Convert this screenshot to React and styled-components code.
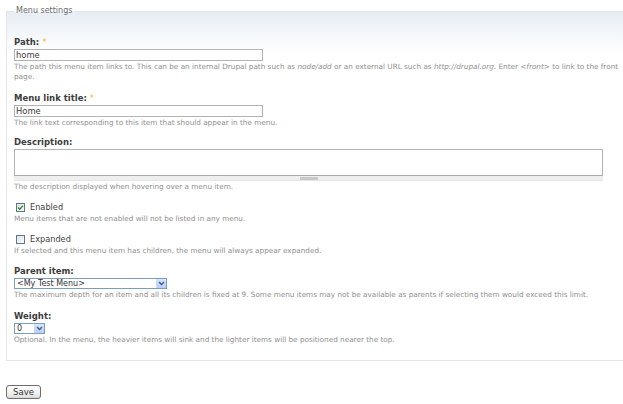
import React from 'react';
import styled, { createGlobalStyle } from 'styled-components';

const GlobalStyle = createGlobalStyle`
  html, body {
    margin: 0;
    padding: 0;
    background: #fff;
    overflow: hidden;
  }
  body {
    font-family: "DejaVu Sans", Verdana, sans-serif;
    color: #494949;
  }
`;

const Page = styled.div`
  width: 623px;
  height: 404px;
  padding: 6px 0 0 6px;
  box-sizing: border-box;
  overflow: hidden;
`;

const Fieldset = styled.fieldset`
  width: 640px;
  margin: 0;
  padding: 21px 7px 15px 7px;
  box-sizing: border-box;
  border: 1px solid #e3e5e8;
  background: linear-gradient(to bottom, #e7edf4 0, #f3f6f9 20px, #fff 42px);
`;

const Legend = styled.legend`
  padding: 0 2px;
  font-size: 8px;
  line-height: 10px;
  color: #6a6a6a;
`;

const FormItem = styled.div`
  margin-bottom: ${({ $gap }) => ($gap !== undefined ? $gap : 10)}px;
`;

const Label = styled.label`
  display: block;
  margin-bottom: 2px;
  font-size: 8.5px;
  line-height: 10px;
  font-weight: bold;
  color: #3c3c3c;
`;

const Required = styled.span`
  color: #f5b92e;
  font-weight: normal;
`;

const TextInput = styled.div`
  width: 249px;
  height: 12px;
  box-sizing: border-box;
  border: 1px solid #b3b3b3;
  padding: 0 1px;
  font-size: 8.4px;
  line-height: 10px;
  color: #3a3a3a;
  background: #fff;
`;

const TextArea = styled.div`
  width: 589px;
  height: 27px;
  box-sizing: border-box;
  border: 1px solid #b3b3b3;
  border-bottom-color: #a9a9a9;
  background: #fff;
`;

const Grip = styled.div`
  width: 589px;
  height: 5px;
  display: flex;
  justify-content: center;
  background: #eeeeee;
  border-bottom: 1px solid #e6e6e6;
  box-sizing: border-box;
`;

const GripHandle = styled.div`
  width: 18px;
  height: 3px;
  margin-top: 1px;
  background: #c9c9c9;
`;

const Description = styled.div`
  margin-top: 1px;
  font-size: 7.28px;
  line-height: 10px;
  color: #8f8f8f;

  em {
    font-style: italic;
  }
`;

const CheckRow = styled.div`
  display: flex;
  align-items: center;
  height: 12px;
  padding-left: 2px;
  font-size: 8.2px;
  color: #404040;
`;

const CheckBox = styled.span`
  width: 9px;
  height: 9px;
  box-sizing: border-box;
  margin-right: 5px;
  display: flex;
  align-items: center;
  justify-content: center;
  border: 1px solid #5d7892;
  background: linear-gradient(135deg, #e3e3de 0%, #fbfbfa 100%);
`;

const SelectBox = styled.div`
  width: ${({ $width }) => $width}px;
  height: 11px;
  box-sizing: border-box;
  display: flex;
  align-items: center;
  border: 1px solid #7f9db9;
  background: #fff;
  font-size: 8px;
  color: #333;
`;

const SelectText = styled.span`
  flex: 1;
  padding-left: 2px;
  line-height: 9px;
  white-space: nowrap;
`;

const SelectArrow = styled.span`
  width: 9px;
  height: 9px;
  display: flex;
  align-items: center;
  justify-content: center;
  background: linear-gradient(to bottom, #dbe6fd 0%, #b9cdf7 100%);
  border-left: 1px solid #c9d8f8;
`;

const SaveButton = styled.button`
  margin-top: 24px;
  width: 35px;
  height: 14px;
  padding: 0;
  box-sizing: border-box;
  border: 1px solid #6f6f6f;
  border-radius: 3px;
  background: linear-gradient(to bottom, #ffffff 0%, #ececec 70%, #d8d8d8 100%);
  font-family: "DejaVu Sans", Verdana, sans-serif;
  font-size: 8.5px;
  line-height: 12px;
  color: #333;
`;

const Check = () => (
  <svg width="7" height="7" viewBox="0 0 7 7">
    <path d="M1 3.4 L2.8 5.2 L6 1.6" fill="none" stroke="#2c8b2c" strokeWidth="1.4" />
  </svg>
);

const Chevron = () => (
  <svg width="7" height="5" viewBox="0 0 7 5">
    <path d="M1 1 L3.5 3.5 L6 1" fill="none" stroke="#3f5d96" strokeWidth="1.5" />
  </svg>
);

const Select = ({ width, value }) => (
  <SelectBox $width={width}>
    <SelectText>{value}</SelectText>
    <SelectArrow>
      <Chevron />
    </SelectArrow>
  </SelectBox>
);

export default function App() {
  return (
    <>
      <GlobalStyle />
      <Page>
        <Fieldset>
          <Legend>Menu settings</Legend>

          <FormItem $gap={11}>
            <Label>
              Path: <Required>*</Required>
            </Label>
            <TextInput>home</TextInput>
            <Description>
              The path this menu item links to. This can be an internal Drupal path such as <em>node/add</em> or an
              external URL such as <em>http://drupal.org</em>. Enter <em>&lt;front&gt;</em> to link to the front
              <br />
              page.
            </Description>
          </FormItem>

          <FormItem $gap={9}>
            <Label>
              Menu link title: <Required>*</Required>
            </Label>
            <TextInput>Home</TextInput>
            <Description>The link text corresponding to this item that should appear in the menu.</Description>
          </FormItem>

          <FormItem $gap={9}>
            <Label>Description:</Label>
            <TextArea />
            <Grip>
              <GripHandle />
            </Grip>
            <Description>The description displayed when hovering over a menu item.</Description>
          </FormItem>

          <FormItem $gap={9}>
            <CheckRow>
              <CheckBox>
                <Check />
              </CheckBox>
              Enabled
            </CheckRow>
            <Description>Menu items that are not enabled will not be listed in any menu.</Description>
          </FormItem>

          <FormItem $gap={10}>
            <CheckRow>
              <CheckBox />
              Expanded
            </CheckRow>
            <Description>
              If selected and this menu item has children, the menu will always appear expanded.
            </Description>
          </FormItem>

          <FormItem $gap={11}>
            <Label>Parent item:</Label>
            <Select width={153} value="<My Test Menu>" />
            <Description>
              The maximum depth for an item and all its children is fixed at 9. Some menu items may not be available
              as parents if selecting them would exceed this limit.
            </Description>
          </FormItem>

          <FormItem $gap={0}>
            <Label>Weight:</Label>
            <Select width={31} value="0" />
            <Description>
              Optional. In the menu, the heavier items will sink and the lighter items will be positioned nearer the
              top.
            </Description>
          </FormItem>
        </Fieldset>

        <SaveButton>Save</SaveButton>
      </Page>
    </>
  );
}
